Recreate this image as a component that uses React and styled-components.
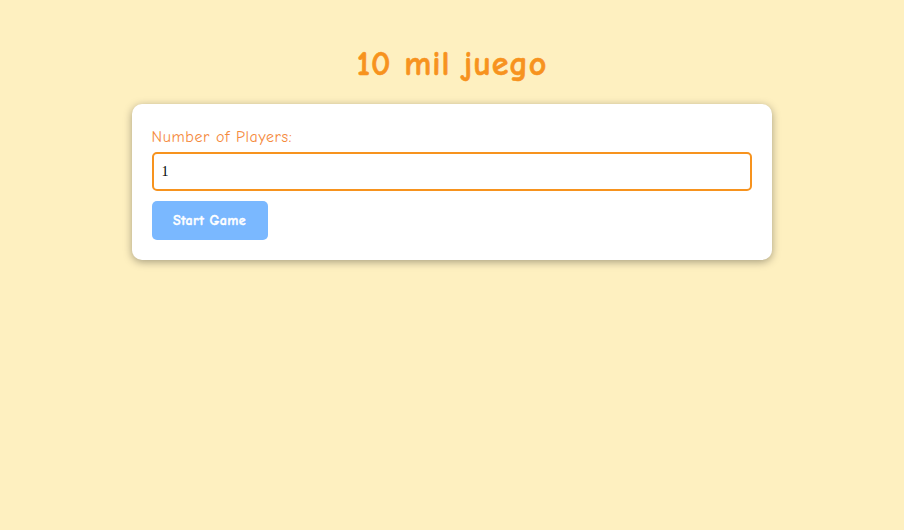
import React, { useState } from "react";
import styled, { createGlobalStyle } from "styled-components";

const Global = createGlobalStyle`
  html, body { margin: 0; padding: 0; background: #fef0c0; }
  body { font-family: "Comic Sans MS", "Comic Neue", "DejaVu Sans", sans-serif; }
`;

const Page = styled.div`
  min-height: 530px;
  display: flex;
  flex-direction: column;
  align-items: center;
  padding-top: 43px;
  box-sizing: border-box;
`;

const Title = styled.h1`
  margin: 0 0 19px;
  font-size: 34px;
  line-height: 42px;
  font-weight: bold;
  letter-spacing: 0.9px;
  color: #f7931e;
  -webkit-text-stroke: 0.6px #f7931e;
`;

const Card = styled.div`
  width: 640px;
  box-sizing: border-box;
  background: #fff;
  border-radius: 10px;
  padding: 22px 20px 20px;
  box-shadow: 0 2px 8px rgba(0, 0, 0, 0.35);
  display: flex;
  flex-direction: column;
  align-items: flex-start;
  margin-left: -1px;
`;

const Label = styled.label`
  font-size: 16px;
  line-height: 22px;
  letter-spacing: 0.6px;
  color: #f58a3c;
  margin-bottom: 4px;
`;

const Input = styled.input`
  width: 100%;
  height: 39px;
  box-sizing: border-box;
  border: 2px solid #f7931e;
  border-radius: 5px;
  padding: 0 8px;
  font-family: "Liberation Serif", serif;
  font-size: 14px;
  color: #000;
  outline: none;
  margin-bottom: 10px;
`;

const Button = styled.button`
  width: 116px;
  height: 39px;
  border: none;
  border-radius: 5px;
  background: #7ab8ff;
  color: #fff;
  font-family: inherit;
  font-weight: bold;
  font-size: 14px;
  letter-spacing: 0.4px;
  -webkit-text-stroke: 0.4px #fff;
  cursor: pointer;
`;

export default function App() {
  const [n, setN] = useState("1");
  return (
    <>
      <Global />
      <Page>
        <Title>10 mil juego</Title>
        <Card>
          <Label htmlFor="players">Number of Players:</Label>
          <Input id="players" type="number" value={n} onChange={(e) => setN(e.target.value)} />
          <Button>Start Game</Button>
        </Card>
      </Page>
    </>
  );
}
